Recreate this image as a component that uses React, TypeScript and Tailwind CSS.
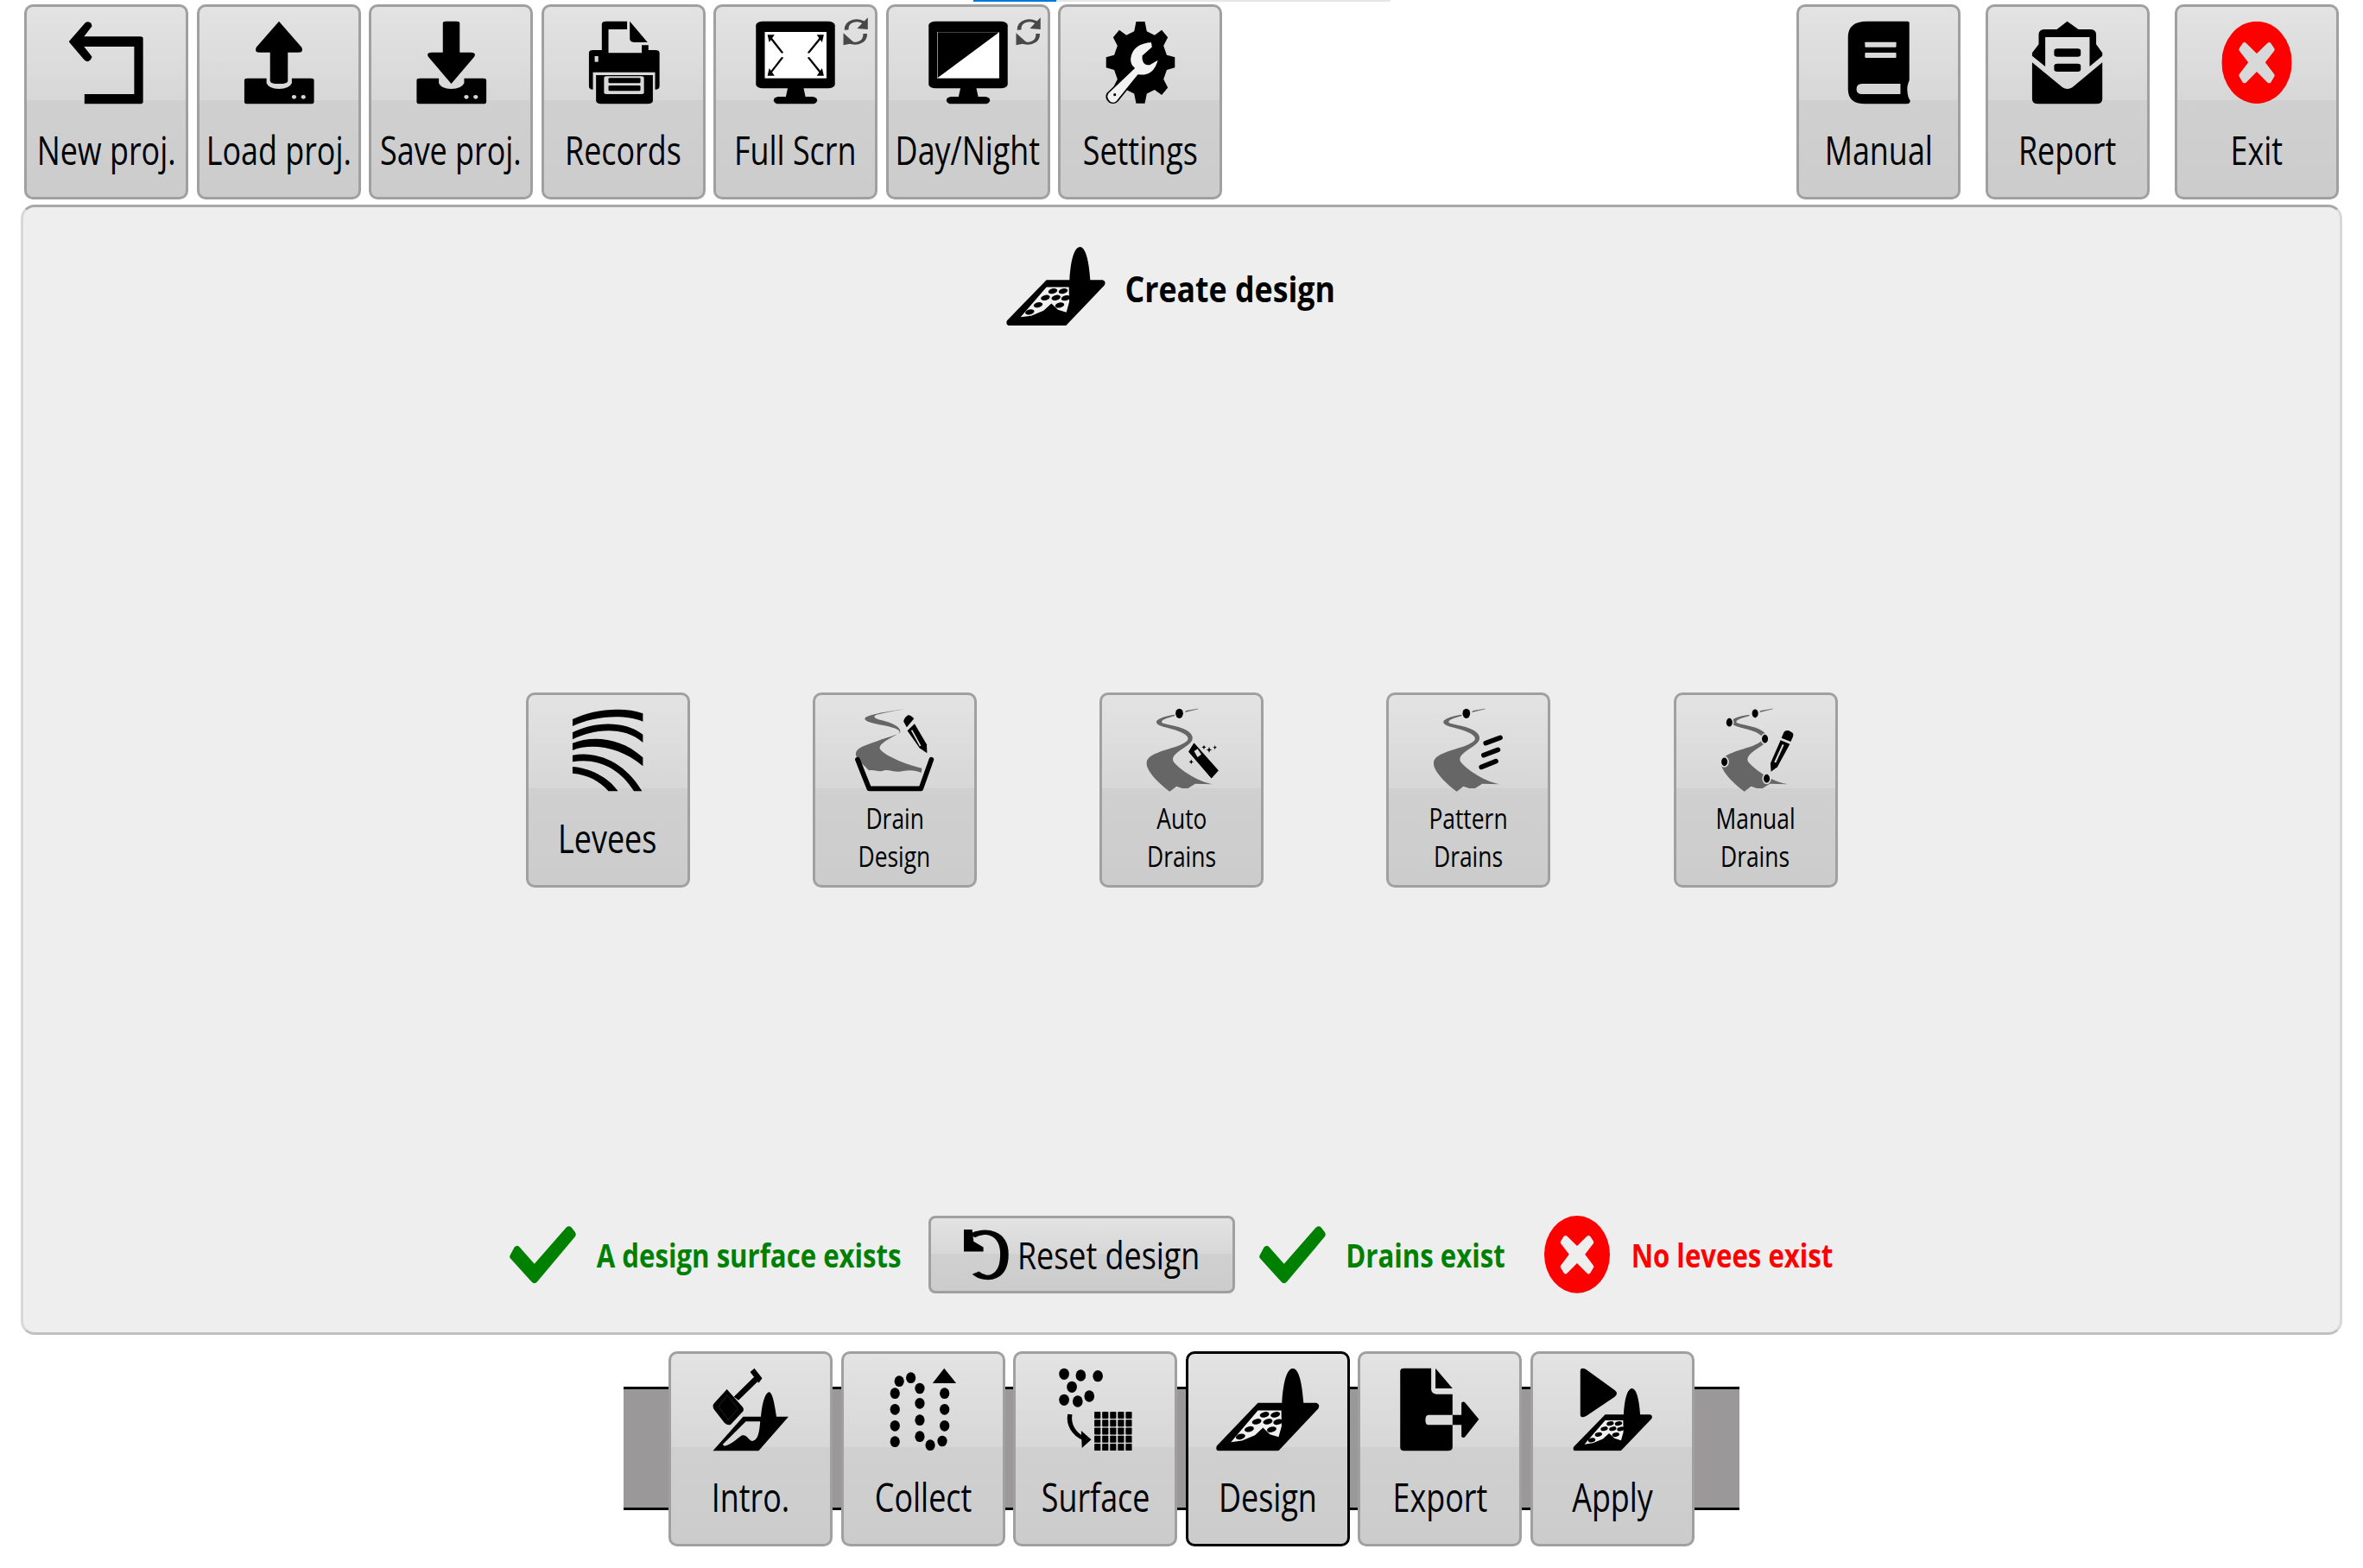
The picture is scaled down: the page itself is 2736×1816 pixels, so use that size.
import React from "react";

const FONT = "font-['Open_Sans',sans-serif]";
const BTN_BG = "bg-[linear-gradient(#e3e3e3_0%,#d7d7d7_49%,#d0d0d0_49%,#cccccc_100%)]";

function gearPath(cx: number, cy: number, rx: number, ry: number, teeth: number) {
  const pts: string[] = [];
  const step = (Math.PI * 2) / teeth;
  for (let i = 0; i < teeth; i++) {
    const a = i * step - Math.PI / 2;
    const add = (off: number, r: number) =>
      pts.push(`${(cx + Math.cos(a + off) * rx * r).toFixed(1)} ${(cy + Math.sin(a + off) * ry * r).toFixed(1)}`);
    add(-step * 0.3, 0.78);
    add(-step * 0.16, 1);
    add(step * 0.16, 1);
    add(step * 0.3, 0.78);
  }
  return "M" + pts.join(" L") + "Z";
}

const Icon = ({ box, children }: { box: string; children: React.ReactNode }) => (
  <svg viewBox={box} preserveAspectRatio="none" className="block w-full h-[130px] shrink-0">
    {children}
  </svg>
);

const Tray = ({ dx = 0 }: { dx?: number }) => (
  <g transform={`translate(${dx} 0)`}>
    <path d="M562 273 L605 273 L605 290 Q610 310 633 310 Q656 310 662 290 L662 273 L705 273 Q712 273 712 280 L712 355 Q712 362 705 362 L562 362 Q555 362 555 355 L555 280 Q555 273 562 273Z" />
    <ellipse cx="667" cy="338" rx="5" ry="7" fill="#d6d6d6" />
    <ellipse cx="688" cy="338" rx="5" ry="7" fill="#d6d6d6" />
  </g>
);

const Monitor = ({ dx = 0 }: { dx?: number }) => (
  <g transform={`translate(${dx} 0)`}>
    <rect x="188" y="75" width="178" height="233" rx="16" ry="14" />
    <path d="M260 305 L295 305 L300 340 L255 340Z" />
    <rect x="228" y="337" width="98" height="25" rx="12" />
    <g fill="none" stroke="#484848" strokeWidth="9">
      <path d="M392 105 C390 72 420 62 434 84" />
      <path d="M434 118 C436 152 406 162 392 140" />
    </g>
    <path d="M440 62 L440 103 L416 100Z M385 116 L385 158 L410 150Z" fill="#484848" />
  </g>
);

const Arrow = ({ d }: { d: string }) => <path d={d} fill="none" stroke="#000" strokeWidth="5" />;

const DesignGlyph = ({ x, y, width, height }: { x: number; y: number; width: number; height: number }) => (
  <svg x={x} y={y} width={width} height={height} viewBox="195 78 345 274" preserveAspectRatio="none">
    <path d="M335 193 L415 193 C420 110 435 78 452 78 C470 80 482 120 487 193 L530 193 Q544 198 536 212 L405 350 Q403 353 398 353 L205 353 Q192 349 198 335Z" />
    <path d="M335 218 L413 218 L414 270 L404 306 L375 297 L352 275 L325 300 L282 318 L245 323Z" fill="#f0f0f0" />
    {[
      [357, 232], [393, 232], [331, 255], [368, 255], [402, 256], [306, 280], [381, 281], [277, 305],
    ].map(([cx, cy]) => (
      <ellipse key={`${cx}-${cy}`} cx={cx} cy={cy} rx="16" ry="9" transform={`rotate(-14 ${cx} ${cy})`} />
    ))}
  </svg>
);

const XCircle = ({ className }: { className: string }) => (
  <svg viewBox="1199 75 182 287" preserveAspectRatio="none" className={className}>
    <ellipse cx="1290" cy="218" rx="91" ry="143" fill="#ff0000" />
    <path
      d="M1262 150 L1290 187 L1318 150 Q1322 146 1326 150 L1335 168 Q1338 173 1335 178 L1312 218 L1335 258 Q1338 263 1335 268 L1326 288 Q1322 292 1318 288 L1290 250 L1262 288 Q1258 292 1254 288 L1245 268 Q1242 263 1245 258 L1268 218 L1245 178 Q1242 173 1245 168 L1254 150 Q1258 146 1262 150Z"
      fill="#eeeeee"
    />
  </svg>
);

const Check = () => (
  <svg viewBox="52 117 134 201" preserveAspectRatio="none" className="w-[77px] h-[67px] shrink-0">
    <path
      d="M166 122 Q172 114 177 122 L184 138 Q187 146 184 154 L108 310 Q102 322 96 310 L55 232 Q50 225 54 215 L62 190 Q68 180 72 190 L102 248Z"
      fill="#008000"
    />
  </svg>
);

const RIVER =
  "M1178 56 C1140 62 1112 72 1116 84 C1120 100 1190 105 1215 125 C1235 140 1225 150 1190 165 C1130 185 1082 195 1082 225 C1082 255 1130 300 1162 323 L1185 305 L1205 312 L1225 312 L1250 296 L1312 298 C1260 290 1200 250 1175 220 C1165 200 1190 185 1220 165 C1250 145 1245 125 1220 110 C1190 92 1130 90 1134 80 C1136 72 1160 66 1180 60Z";

const River = ({ dot = true }: { dot?: boolean }) => (
  <g>
    <path d={RIVER} fill="#666666" />
    <path d="M1215 47 L1260 36 L1218 43Z" fill="#555555" stroke="#555555" strokeWidth="1" />
    {dot && <ellipse cx="1195" cy="52" rx="13" ry="17" />}
  </g>
);

const icons: Record<string, React.ReactNode> = {
  new: (
    <Icon box="63 25 358 390">
      <path d="M158 145 L195 80 Q202 72 208 82 L210 92 L192 128 L318 128 Q325 128 325 135 L325 355 Q325 362 318 362 L193 362 L193 328 L305 328 L305 163 L192 163 L210 198 Q208 210 202 214 Q196 216 192 208 L160 150Z" />
    </Icon>
  ),
  load: (
    <Icon box="454 25 358 390">
      <path d="M633 75 L684 165 Q690 183 676 183 L653 183 L653 282 Q653 292 633 292 Q613 292 613 282 L613 183 L590 183 Q576 183 582 165Z" />
      <Tray />
    </Icon>
  ),
  save: (
    <Icon box="844 25 358 390">
      <path d="M1012 75 L1036 75 Q1043 75 1043 82 L1043 183 L1068 183 Q1082 183 1075 200 L1024 292 L973 200 Q966 183 980 183 L1005 183 L1005 82 Q1005 75 1012 75Z" />
      <Tray dx={391} />
    </Icon>
  ),
  records: (
    <Icon box="1235 25 358 390">
      <path d="M1345 175 L1365 175 L1365 85 Q1365 75 1375 75 L1422 75 L1422 103 L1380 103 L1380 185 L1455 185 L1455 158 L1470 158 L1470 175 L1485 175 Q1495 175 1495 185 L1495 300 Q1495 312 1485 312 L1485 252 L1345 252 L1345 312 Q1336 312 1336 300 L1336 185 Q1336 175 1345 175Z" />
      <path d="M1428 75 L1468 148 L1440 148 Q1428 148 1428 135Z" />
      <path d="M1352 262 L1480 262 L1480 350 Q1480 362 1468 362 L1364 362 Q1352 362 1352 350Z" />
      <rect x="1370" y="266" width="90" height="62" rx="5" fill="#d8d8d8" />
      <rect x="1380" y="272" width="72" height="18" rx="3" />
      <rect x="1380" y="298" width="72" height="19" rx="3" />
      <rect x="1349" y="196" width="8" height="20" fill="#d8d8d8" />
    </Icon>
  ),
  full: (
    <Icon box="98 25 358 390">
      <Monitor />
      <rect x="208" y="112" width="139" height="161" fill="#fff" />
      <Arrow d="M248 185 L220 130 M306 185 L335 130 M248 200 L220 256 M306 200 L335 256" />
      <path d="M214 122 L230 122 L218 148Z M341 122 L325 122 L337 148Z M214 264 L230 264 L218 238Z M341 264 L325 264 L337 238Z" />
    </Icon>
  ),
  day: (
    <Icon box="489 25 358 390">
      <Monitor dx={391} />
      <rect x="598" y="112" width="140" height="161" fill="#fff" />
      <path d="M599 113 L738 113 L599 272Z" />
    </Icon>
  ),
  settings: (
    <Icon box="880 25 358 390">
      <path d={gearPath(1060, 218, 78, 143, 8)} />
      <path
        d="M1086 146 Q1040 150 1036 205 Q1035 225 1045 238 L986 325 Q980 340 990 355 Q1000 365 1008 352 L1055 262 Q1092 270 1102 205 L1080 225 Q1064 225 1066 195 L1088 165Z"
        fill="#f2f2f2"
        stroke="#000"
        strokeWidth="4"
      />
      <ellipse cx="1002" cy="330" rx="3" ry="5" />
    </Icon>
  ),
  manual: (
    <Icon box="99 25 412 390">
      <path d="M275 75 L380 75 Q385 75 385 80 L385 280 Q378 300 380 320 Q381 340 387 350 Q388 362 378 362 L270 362 Q226 362 226 310 L226 130 Q226 75 275 75Z" />
      <rect x="270" y="147" width="81" height="18" rx="2" fill="#dadada" />
      <rect x="270" y="184" width="81" height="18" rx="2" fill="#dadada" />
      <path d="M262 292 L362 292 L362 328 L262 328 Q248 328 248 310 Q248 292 262 292Z" fill="#d6d6d6" />
    </Icon>
  ),
  report: (
    <Icon box="592 25 412 390">
      <path d="M706 218 L785 305 Q797 315 810 305 L888 218 L888 345 Q888 362 872 362 L722 362 Q706 362 706 345Z" />
      <path d="M797 75 L826 103 L855 103 Q872 103 872 120 L872 155 L888 185 L888 195 L855 232 L855 130 L740 130 L740 232 L706 195 L706 185 L723 155 L723 120 Q723 103 740 103 L770 103Z" />
      <rect x="763" y="170" width="69" height="28" rx="8" />
      <rect x="763" y="222" width="69" height="28" rx="8" />
    </Icon>
  ),
  exit: (
    <Icon box="1084 25 412 390">
      <svg x="1199" y="75" width="182" height="287" viewBox="1199 75 182 287" preserveAspectRatio="none">
        <ellipse cx="1290" cy="218" rx="91" ry="143" fill="#ff0000" />
        <path
          d="M1262 150 L1290 187 L1318 150 Q1322 146 1326 150 L1335 168 Q1338 173 1335 178 L1312 218 L1335 258 Q1338 263 1335 268 L1326 288 Q1322 292 1318 288 L1290 250 L1262 288 Q1258 292 1254 288 L1245 268 Q1242 263 1245 258 L1268 218 L1245 178 Q1242 173 1245 168 L1254 150 Q1258 146 1262 150Z"
          fill="#d8d8d8"
        />
      </svg>
    </Icon>
  ),
  levees: (
    <Icon box="-84 -12 549 390">
      <path d="M68 72 C130 40 240 25 311 52 L311 80 C240 50 130 65 68 96Z" />
      <path d="M68 118 C130 85 240 70 311 125 L311 153 C240 90 130 110 68 142Z" />
      <path d="M68 155 C130 130 230 130 311 205 L311 235 C230 165 130 155 68 180Z" />
      <path d="M68 197 C150 180 250 220 308 322 L280 322 C230 240 150 205 68 220Z" />
      <path d="M68 237 C120 240 190 270 225 322 L192 322 C160 285 120 265 68 260Z" />
    </Icon>
  ),
  drain: (
    <Icon box="912 -12 549 390">
      <path
        d="M1220 37 C1170 45 1085 55 1083 70 C1085 90 1170 90 1200 110 C1215 125 1170 130 1120 150 C1075 165 1050 175 1052 195 C1055 215 1085 235 1097 250 C1120 245 1130 258 1150 250 C1170 245 1190 260 1215 252 C1240 248 1260 250 1278 258 L1280 242 C1240 235 1150 200 1135 175 C1130 155 1180 135 1205 118 C1210 100 1180 85 1140 75 C1110 68 1110 60 1130 55 C1160 48 1190 42 1220 37Z"
        fill="#666666"
      />
      <path d="M1058 212 L1098 313 L1277 313 L1313 212" fill="none" stroke="#000" strokeWidth="17" strokeLinecap="round" strokeLinejoin="round" />
      <path d="M1217 80 Q1217 72 1225 64 L1232 58 Q1240 56 1253 70 L1228 100Z" />
      <path d="M1230 112 L1255 88 L1297 160 L1298 190 L1272 172Z" />
      <path d="M1245 110 L1275 165" stroke="#dddddd" strokeWidth="5" fill="none" />
    </Icon>
  ),
  auto: (
    <Icon box="928 -12 549 390">
      <River />
      <path d="M1246 157 L1328 250 L1306 275 L1229 185Z" stroke="#000" strokeWidth="4" strokeLinejoin="round" />
      <path d="M1246 183 L1258 175 L1271 194 L1258 204Z" fill="#dcdcdc" />
      <path d="M1298 168 L1301 176 L1308 178 L1301 181 L1298 188 L1295 181 L1288 178 L1295 176Z M1280 162 L1283 167 L1288 169 L1283 171 L1280 176 L1277 171 L1272 169 L1277 167Z M1318 162 L1320 168 L1325 170 L1320 172 L1318 178 L1316 172 L1311 170 L1316 168Z M1236 212 L1239 218 L1244 220 L1239 222 L1236 228 L1233 222 L1228 220 L1233 218Z" />
    </Icon>
  ),
  pattern: (
    <Icon box="927 -12 549 390">
      <River />
      <path d="M1262 155 L1312 136 M1255 197 L1304 178 M1247 238 L1297 218" stroke="#000" strokeWidth="17" strokeLinecap="round" fill="none" />
    </Icon>
  ),
  manualDrains: (
    <Icon box="927 -12 549 390">
      <River dot={false} />
      {[
        [1199, 52], [1110, 83], [1233, 140], [1093, 220], [1239, 278],
      ].map(([cx, cy]) => (
        <ellipse key={cx} cx={cx} cy={cy} rx="13" ry="17" stroke="#dcdcdc" strokeWidth="5" />
      ))}
      <path d="M1298 118 Q1304 108 1316 112 L1326 118 Q1334 122 1329 134 L1322 150 L1290 137Z" />
      <path d="M1287 145 L1319 158 L1276 238 L1254 254 L1252 225Z" />
      <path d="M1296 160 L1268 222" stroke="#dcdcdc" strokeWidth="6" fill="none" />
    </Icon>
  ),
  intro: (
    <Icon box="152 85 410 390">
      <path d="M366 165 L378 178 L326 246 L314 234Z" />
      <path d="M356 148 L367 135 L387 170 L378 186Z" />
      <path d="M296 208 L337 270 Q342 280 335 288 L306 330 Q298 335 290 325 L264 280 Q256 265 264 255Z" />
      <path d="M296 228 L325 275 L300 315 L274 268Z" fill="none" stroke="#555555" strokeWidth="1" />
      <path d="M338 303 L455 303 L378 422 L260 422Z" />
      <path d="M345 320 L382 320 C380 350 378 385 362 388 C350 385 350 365 335 368 C325 375 310 400 290 405 L285 400Z" fill="#d8d8d8" />
      <path d="M383 322 C385 260 395 218 405 218 C415 220 420 270 425 312Z" />
    </Icon>
  ),
  collect: (
    <Icon box="599 85 410 390">
      {[
        [742, 180], [772, 168], [731, 222], [795, 205], [731, 278], [795, 257], [731, 335], [795, 315], [731, 390],
        [795, 372], [822, 402], [853, 388], [859, 222], [859, 278], [859, 335],
      ].map(([cx, cy]) => (
        <ellipse key={`${cx}-${cy}`} cx={cx} cy={cy} rx="12.5" ry="19" />
      ))}
      <path d="M858 135 L889 187 L828 187Z" />
    </Icon>
  ),
  surface: (
    <Icon box="1045 85 410 390">
      {[
        [1170, 155], [1213, 160], [1257, 162], [1190, 200], [1235, 232], [1170, 245], [1205, 250],
      ].map(([cx, cy]) => (
        <ellipse key={`${cx}-${cy}`} cx={cx} cy={cy} rx="13" ry="20" />
      ))}
      <path d="M1185 295 C1180 330 1195 365 1222 380" fill="none" stroke="#000" strokeWidth="12" />
      <path d="M1214 352 L1240 383 L1216 412Z" />
      {[0, 1, 2, 3, 4].flatMap((r) =>
        [0, 1, 2, 3, 4].map((c) => (
          <rect key={`${r}-${c}`} x={1248 + c * 20.2} y={286 + r * 27.8} width="16" height="24" rx="2" />
        ))
      )}
    </Icon>
  ),
  design: (
    <Icon box="37 85 410 390">
      <DesignGlyph x={108} y={135} width={267} height={287} />
    </Icon>
  ),
  export: (
    <Icon box="484 85 410 390">
      <path d="M595 135 L667 135 L667 208 Q667 222 680 225 L722 225 L722 297 L660 297 Q652 297 652 315 Q652 332 660 332 L722 332 L722 410 Q722 422 710 422 L597 422 Q587 422 587 410 L587 145 Q587 135 597 135Z" />
      <path d="M678 135 L722 205 L678 205Z" />
      <path d="M722 297 L745 297 L745 255 Q750 248 755 255 L790 312 L755 372 Q750 380 745 372 L745 332 L722 332Z" />
    </Icon>
  ),
  apply: (
    <Icon box="930 85 410 390">
      <path d="M1052 145 Q1052 130 1066 138 L1140 210 Q1152 222 1140 235 L1068 300 Q1052 312 1052 295Z" />
      <DesignGlyph x={1033} y={205} width={205} height={217} />
    </Icon>
  ),
};

const Label = ({ children, scale, className }: { children: React.ReactNode; scale: string; className: string }) => (
  <span className={`inline-block whitespace-nowrap ${FONT} ${scale} ${className}`}>{children}</span>
);

function ToolButton({ icon, label, lines, active }: { icon: string; label?: string; lines?: string[]; active?: boolean }) {
  return (
    <div
      className={`flex flex-col items-center shrink-0 w-[190px] h-[226px] rounded-[10px] border-[3px] overflow-hidden ${BTN_BG} ${
        active ? "border-black" : "border-[#a0a0a0]"
      }`}
    >
      {icons[icon]}
      {label && (
        <div className="mt-[3px] h-[64px] leading-[64px]">
          <Label scale="scale-x-[0.78]" className="text-[46px] text-black">
            {label}
          </Label>
        </div>
      )}
      {lines && (
        <div className="mt-[-9px] flex flex-col items-center">
          {lines.map((l) => (
            <div key={l} className="h-[44px] leading-[44px]">
              <Label scale="scale-x-[0.8]" className="text-[33px] text-black">
                {l}
              </Label>
            </div>
          ))}
        </div>
      )}
    </div>
  );
}

const StatusText = ({ width, color, children }: { width: string; color: string; children: React.ReactNode }) => (
  <div className={`flex justify-center shrink-0 ${width}`}>
    <Label scale="scale-x-[0.82]" className={`text-[38px] font-bold ${color}`}>
      {children}
    </Label>
  </div>
);

export default function App() {
  return (
    <div className="relative w-[2736px] h-[1816px] bg-white overflow-hidden">
      {/* progress line at the very top */}
      <div className="absolute top-0 left-[1127px] w-[483px] h-[2px] bg-[#e6e6e6]">
        <div className="w-[96px] h-full bg-[#0078d7]" />
      </div>

      <div className="flex justify-between pt-[5px] px-[28px]">
        <div className="flex gap-[9.5px]">
          <ToolButton icon="new" label="New proj." />
          <ToolButton icon="load" label="Load proj." />
          <ToolButton icon="save" label="Save proj." />
          <ToolButton icon="records" label="Records" />
          <ToolButton icon="full" label="Full Scrn" />
          <ToolButton icon="day" label="Day/Night" />
          <ToolButton icon="settings" label="Settings" />
        </div>
        <div className="flex gap-[29px]">
          <ToolButton icon="manual" label="Manual" />
          <ToolButton icon="report" label="Report" />
          <ToolButton icon="exit" label="Exit" />
        </div>
      </div>

      <div className="mt-[6px] mx-[24px] h-[1309px] flex flex-col items-center rounded-[16px] border-[3px] border-[#a8a8a8] border-x-[#d8d8d8] border-b-[#c0c0c0] bg-[#eeeeee]">
        <div className="flex items-center pt-[46px] pr-[26px]">
          <svg viewBox="0 0 115 91" className="w-[115px] h-[91px]">
            <DesignGlyph x={0} y={0} width={115} height={91} />
          </svg>
          <div className="ml-[23px] w-[243px] flex justify-center pt-[3px]">
            <Label scale="scale-x-[0.85]" className="text-[42px] font-bold text-black">
              Create design
            </Label>
          </div>
        </div>

        <div className="flex gap-[142.25px] mt-[425px]">
          <ToolButton icon="levees" label="Levees" />
          <ToolButton icon="drain" lines={["Drain", "Design"]} />
          <ToolButton icon="auto" lines={["Auto", "Drains"]} />
          <ToolButton icon="pattern" lines={["Pattern", "Drains"]} />
          <ToolButton icon="manualDrains" lines={["Manual", "Drains"]} />
        </div>

        <div className="flex items-center h-[90px] mt-[380px] pr-[24px]">
          <Check />
          <div className="w-[22px]" />
          <StatusText width="w-[356px]" color="text-[#008000]">
            A design surface exists
          </StatusText>
          <div className="w-[30px]" />
          <div className={`flex items-center w-[355px] h-[90px] shrink-0 rounded-[8px] border-[3px] border-[#a0a0a0] pl-[38px] ${BTN_BG}`}>
            <svg viewBox="968 125 92 185" preserveAspectRatio="none" className="w-[52px] h-[61px] shrink-0">
              <path d="M985 150 C1010 125 1051 135 1051 215 C1051 300 1015 312 992 280" fill="none" stroke="#000" strokeWidth="17" />
              <path d="M968 128 L968 205 L1008 205 L1008 190 L988 170 L985 128Z" />
            </svg>
            <div className="ml-[11px] w-[209px] flex justify-center">
              <Label scale="scale-x-[0.815]" className="text-[44px] text-black">
                Reset design
              </Label>
            </div>
          </div>
          <div className="w-[28px]" />
          <Check />
          <div className="w-[25px]" />
          <StatusText width="w-[181px]" color="text-[#008000]">
            Drains exist
          </StatusText>
          <div className="w-[47px]" />
          <XCircle className="w-[76px] h-[90px] shrink-0" />
          <div className="w-[25px]" />
          <StatusText width="w-[233px]" color="text-[#ff0000]">
            No levees exist
          </StatusText>
        </div>
      </div>

      <div className="relative mt-[19px] mx-auto w-[1292px] h-[226px]">
        <div className="absolute inset-x-0 top-[41px] h-[143px] bg-[#9a9898] border-y-[3px] border-black" />
        <div className="relative flex justify-center gap-[9.5px]">
          <ToolButton icon="intro" label="Intro." />
          <ToolButton icon="collect" label="Collect" />
          <ToolButton icon="surface" label="Surface" />
          <ToolButton icon="design" label="Design" active />
          <ToolButton icon="export" label="Export" />
          <ToolButton icon="apply" label="Apply" />
        </div>
      </div>
    </div>
  );
}
